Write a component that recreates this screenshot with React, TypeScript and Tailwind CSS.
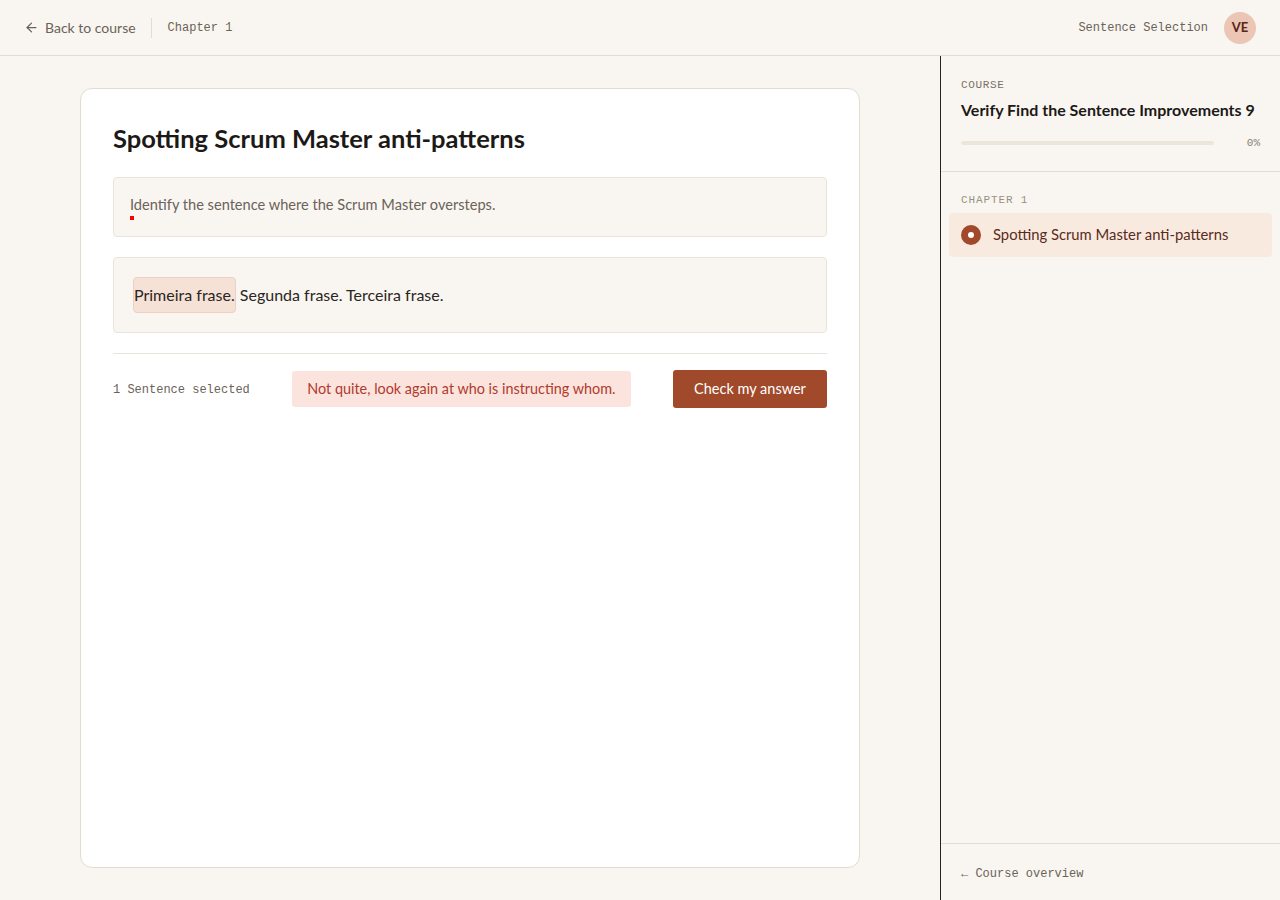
import { ArrowLeft } from "lucide-react";

const sans = "font-['Lato',sans-serif]";
const mono = "font-['Liberation_Mono',monospace]";

const Header = () => (
  <header className="flex h-[56px] items-center justify-between border-b border-[#e3dcd2] px-6">
    <div className="flex items-center">
      <button className={`flex items-center gap-[6px] text-[14px] text-[#6b6258] ${sans}`}>
        <ArrowLeft size={15} strokeWidth={2} />
        Back to course
      </button>
      <div className="ml-[15px] mr-4 h-5 w-px bg-[#e3dcd2]" />
      <span className={`text-[12px] text-[#6b6258] ${mono}`}>Chapter 1</span>
    </div>
    <div className="flex items-center gap-4">
      <span className={`text-[12px] text-[#6b6258] ${mono}`}>Sentence Selection</span>
      <div
        className={`flex h-8 w-8 items-center justify-center rounded-full bg-[#ecc6b4] text-[13px] font-bold text-[#5a2418] ${sans}`}
      >
        VE
      </div>
    </div>
  </header>
);

const Exercise = () => (
  <main className="flex-1 px-20 py-8">
    <div className="h-full rounded-xl border border-[#e3dcd2] bg-white px-8 pt-[33px]">
      <h1 className={`text-[25.5px] font-bold leading-[32px] text-[#1c1917] ${sans}`}>
        Spotting Scrum Master anti-patterns
      </h1>
      <div className="mt-[23px] h-[60px] rounded-[4px] border border-[#ebe4da] bg-[#f9f6f1] px-4 pt-[17px]">
        <p className={`text-[14.6px] leading-[20px] text-[#6b6258] ${sans}`}>
          Identify the sentence where the Scrum Master oversteps.
        </p>
        <div className="mt-[1px] h-[4px] w-[4px] bg-[#ff0000]" />
      </div>
      <div className="mt-5 flex h-[76px] items-center rounded-[4px] border border-[#ebe4da] bg-[#f9f6f1] px-[19px]">
        <p className={`text-[16px] text-[#2a2622] ${sans}`}>
          <span className="inline-block rounded-[4px] border border-[#ecd0c0] bg-[#f5e1d6] leading-[34px]">
            Primeira frase.
          </span>{" "}
          Segunda frase. Terceira frase.
        </p>
      </div>
      <div className="mt-5 border-t border-[#ebe4da]" />
      <div className="mt-4 flex items-center justify-between">
        <span className={`pt-[2px] text-[12px] text-[#6b6258] ${mono}`}>1 Sentence selected</span>
        <div
          className={`flex h-9 w-[339px] items-center justify-center rounded-[3px] bg-[#fbe4de] text-[14.4px] text-[#b13a2c] ${sans}`}
        >
          Not quite, look again at who is instructing whom.
        </div>
        <button
          className={`h-[38px] w-[154px] rounded-[3px] bg-[#a1492b] text-[14.5px] text-white ${sans}`}
        >
          Check my answer
        </button>
      </div>
    </div>
  </main>
);

const Sidebar = () => (
  <aside className="flex w-[340px] flex-col border-l border-[#2a2420]">
    <div className="border-b border-[#e3dcd2] px-5 pb-[20px] pt-[21px]">
      <div className={`text-[11px] uppercase tracking-[0.06em] text-[#7a7066] ${mono}`}>Course</div>
      <div className={`mt-[4px] whitespace-nowrap text-[16px] font-bold text-[#1c1917] ${sans}`}>
        Verify Find the Sentence Improvements 9
      </div>
      <div className="mt-[13px] flex items-center gap-[33px]">
        <div className="h-[4px] flex-1 rounded-full bg-[#ece5dc]" />
        <span className={`text-[11px] text-[#8a8076] ${mono}`}>0%</span>
      </div>
    </div>
    <div className="flex-1 px-2 pt-[20px]">
      <div className={`px-3 text-[11px] tracking-[0.08em] text-[#9a9086] ${mono}`}>CHAPTER 1</div>
      <div className="mt-[4px] flex h-[44px] items-center gap-3 rounded-[4px] bg-[#f8eadf] px-3">
        <span className="flex h-5 w-5 items-center justify-center rounded-full bg-[#a1492b]">
          <span className="h-[6px] w-[6px] rounded-full bg-white" />
        </span>
        <span className={`text-[14.8px] text-[#5a2a1c] ${sans}`}>Spotting Scrum Master anti-patterns</span>
      </div>
    </div>
    <div className="flex h-[57px] items-center border-t border-[#e3dcd2] px-5">
      <span className={`pt-[3px] text-[12px] text-[#6b6258] ${mono}`}>← Course overview</span>
    </div>
  </aside>
);

export default function App() {
  return (
    <div className="flex h-[900px] flex-col bg-[#f9f6f1]">
      <Header />
      <div className="flex min-h-0 flex-1">
        <Exercise />
        <Sidebar />
      </div>
    </div>
  );
}
